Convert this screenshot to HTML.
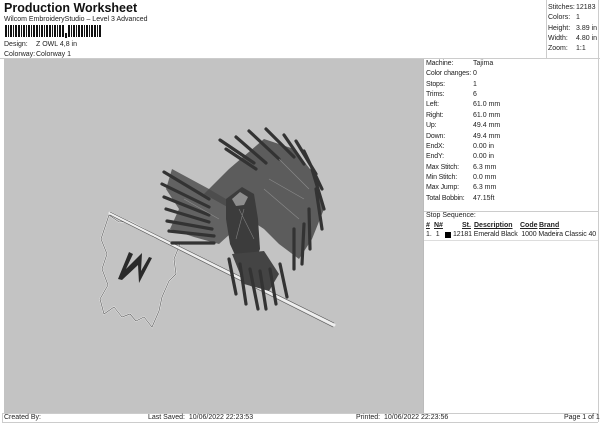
<!DOCTYPE html>
<html><head><style>
body{margin:0;width:600px;height:424px;background:#fff;font-family:"Liberation Sans",sans-serif;color:#222;position:relative;overflow:hidden}
.a{position:absolute;white-space:nowrap;font-size:7px;line-height:8px}
</style></head><body>
<div class="a" style="left:4px;top:1px;font-size:12.5px;line-height:14px;font-weight:bold;color:#111">Production Worksheet</div>
<div class="a" style="left:4px;top:16px">Wilcom EmbroideryStudio – Level 3 Advanced</div>
<svg class="a" style="left:5px;top:25px" width="98" height="13"><g fill="#111">
<rect x="0" y="0" width="2" height="12"/><rect x="3" y="0" width="1" height="12"/><rect x="5" y="0" width="2" height="12"/><rect x="8" y="0" width="1" height="12"/><rect x="10" y="0" width="2" height="12"/><rect x="13" y="0" width="2" height="12"/><rect x="16" y="0" width="1" height="12"/><rect x="18" y="0" width="2" height="12"/><rect x="21" y="0" width="1" height="12"/><rect x="23" y="0" width="2" height="12"/><rect x="26" y="0" width="1" height="12"/><rect x="28" y="0" width="2" height="12"/><rect x="31" y="0" width="2" height="12"/><rect x="34" y="0" width="1" height="12"/><rect x="36" y="0" width="2" height="12"/><rect x="39" y="0" width="1" height="12"/><rect x="41" y="0" width="2" height="12"/><rect x="44" y="0" width="2" height="12"/><rect x="47" y="0" width="1" height="12"/><rect x="49" y="0" width="2" height="12"/><rect x="52" y="0" width="1" height="12"/><rect x="54" y="0" width="2" height="12"/><rect x="57" y="0" width="2" height="12"/><rect x="60" y="8" width="2" height="5"/><rect x="63" y="0" width="2" height="12"/><rect x="66" y="0" width="1" height="12"/><rect x="68" y="0" width="2" height="12"/><rect x="71" y="0" width="1" height="12"/><rect x="73" y="0" width="2" height="12"/><rect x="76" y="0" width="2" height="12"/><rect x="79" y="0" width="1" height="12"/><rect x="81" y="0" width="2" height="12"/><rect x="84" y="0" width="1" height="12"/><rect x="86" y="0" width="2" height="12"/><rect x="89" y="0" width="2" height="12"/><rect x="92" y="0" width="1" height="12"/><rect x="94" y="0" width="2" height="12"/></g></svg>
<div class="a" style="left:4px;top:41px">Design:</div><div class="a" style="left:36px;top:41px">Z OWL 4,8 in</div>
<div class="a" style="left:4px;top:51px">Colorway:</div><div class="a" style="left:36px;top:51px">Colorway 1</div>
<div style="position:absolute;left:0;top:58px;width:600px;height:1px;background:#ccc"></div>
<div style="position:absolute;left:546px;top:0;width:1px;height:58px;background:#ccc"></div>
<div style="position:absolute;left:598px;top:0;width:1px;height:422px;background:#ccc"></div>
<div class="a" style="left:548px;top:3px;line-height:10.3px">Stitches:<br>Colors:<br>Height:<br>Width:<br>Zoom:</div>
<div class="a" style="left:576px;top:3px;line-height:10.3px">12183<br>1<br>3.89 in<br>4.80 in<br>1:1</div>
<div style="position:absolute;left:4px;top:59px;width:419px;height:354px;background:#c3c3c3"></div>
<div style="position:absolute;left:423px;top:59px;width:1px;height:354px;background:#bbb"></div>
<div class="a" style="left:426px;top:59px;line-height:10.36px;letter-spacing:-0.15px">Machine:<br>Color changes:<br>Stops:<br>Trims:<br>Left:<br>Right:<br>Up:<br>Down:<br>EndX:<br>EndY:<br>Max Stitch:<br>Min Stitch:<br>Max Jump:<br>Total Bobbin:</div>
<div class="a" style="left:473px;top:59px;line-height:10.36px">Tajima<br>0<br>1<br>6<br>61.0 mm<br>61.0 mm<br>49.4 mm<br>49.4 mm<br>0.00 in<br>0.00 in<br>6.3 mm<br>0.0 mm<br>6.3 mm<br>47.15ft</div>
<div style="position:absolute;left:424px;top:211px;width:174px;height:1px;background:#ccc"></div>
<div class="a" style="left:426px;top:212px">Stop Sequence:</div>
<div class="a" style="left:426px;top:222px;font-weight:bold;text-decoration:underline">#</div>
<div class="a" style="left:434px;top:222px;font-weight:bold;text-decoration:underline">N#</div>
<div class="a" style="left:462px;top:222px;font-weight:bold;text-decoration:underline">St.</div>
<div class="a" style="left:474px;top:222px;font-weight:bold;text-decoration:underline">Description</div>
<div class="a" style="left:520px;top:222px;font-weight:bold;text-decoration:underline">Code</div>
<div class="a" style="left:539px;top:222px;font-weight:bold;text-decoration:underline">Brand</div>
<div class="a" style="left:426px;top:231px">1.&nbsp; 1</div>
<div style="position:absolute;left:445px;top:232px;width:6px;height:6px;background:#000"></div>
<div class="a" style="left:453px;top:231px;letter-spacing:-0.1px">12181 Emerald Black&nbsp; 1000 Madeira Classic 40</div>
<div style="position:absolute;left:424px;top:240px;width:174px;height:1px;background:#ddd"></div>
<svg style="position:absolute;left:4px;top:59px" width="419" height="354">
<g fill="none" stroke="#f0f0f0" stroke-width="1.6">
<path d="M105 156 L115 163 L125 162 L140 170 L150 178 L165 183 L176 185 L170 200 L172 215 L165 222 L158 238 L155 252 L148 268 L140 258 L132 262 L126 255 L118 258 L110 248 L100 255 L96 240 L104 226 L98 210 L103 195 L97 180 Z"/>
</g>
<g fill="none" stroke="#555" stroke-width="0.6">
<path d="M105 156 L115 163 L125 162 L140 170 L150 178 L165 183 L176 185 L170 200 L172 215 L165 222 L158 238 L155 252 L148 268 L140 258 L132 262 L126 255 L118 258 L110 248 L100 255 L96 240 L104 226 L98 210 L103 195 L97 180 Z"/>
</g>
<g stroke-linecap="round">
<path d="M106 154 L330 266" stroke="#eee" stroke-width="3"/>
<path d="M106 153 L330 264 M106 156 L329 268" stroke="#555" stroke-width="0.6"/>
</g>
<path d="M114 220 L125 193 L129 195 L122 210 L138 194 L137 212 L145 198 L148 199 L135 224 L134 206 L118 221 Z" fill="#2a2a2a"/>
<g fill="#4a4a4a">
<path d="M168 110 L205 130 L222 140 L226 175 L215 185 L190 178 L166 170 L175 150 L162 130 Z" opacity="0.8"/>
<path d="M200 135 L225 110 L260 80 L290 90 L310 115 L320 150 L308 180 L295 200 L275 185 L260 170 L245 160 Z" opacity="0.85"/>
<path d="M222 140 L238 128 L250 135 L254 160 L256 190 L248 210 L235 205 L226 185 L222 160 Z" fill="#3c3c3c"/>
<path d="M228 195 L260 192 L275 215 L265 232 L240 225 Z" fill="#444"/>
</g>
<g stroke="#333" stroke-linecap="round" fill="none">
<g stroke-width="3.2">
<path d="M160 113 L205 140 M158 125 L205 148 M160 138 L205 156 M162 150 L205 163 M163 162 L208 170 M165 172 L210 177 M168 184 L210 184"/>
<path d="M216 81 L250 104 M222 90 L252 110 M232 78 L262 104 M245 72 L275 100 M262 70 L290 98 M280 76 L300 105 M292 82 L312 115 M300 92 L318 130 M308 110 L320 150 M312 130 L318 170 M305 150 L306 190 M300 165 L298 205 M290 170 L290 210"/>
<path d="M225 200 L232 235 M236 205 L242 245 M246 210 L254 250 M256 212 L262 250 M266 210 L272 245 M276 205 L283 238"/>
</g>
</g>
<path d="M228 140 L236 133 L244 138 L240 146 L232 147 Z" fill="#ddd" opacity="0.5"/>
<g stroke="#aaa" stroke-width="0.6" opacity="0.6" fill="none">
<path d="M235 150 L250 180 M240 150 L232 180 M260 130 L295 160 M265 120 L300 140 M275 100 L305 130 M180 140 L215 160"/>
</g>
</svg>
<div style="position:absolute;left:2px;top:413px;width:596px;height:1px;background:#ccc"></div>
<div style="position:absolute;left:2px;top:422px;width:596px;height:1px;background:#ccc"></div>
<div style="position:absolute;left:2px;top:413px;width:1px;height:10px;background:#ccc"></div>
<div class="a" style="left:4px;top:414px">Created By:</div>
<div class="a" style="left:148px;top:414px">Last Saved:&nbsp; 10/06/2022 22:23:53</div>
<div class="a" style="left:356px;top:414px">Printed:&nbsp; 10/06/2022 22:23:56</div>
<div class="a" style="left:564px;top:414px">Page 1 of 1</div>
</body></html>
